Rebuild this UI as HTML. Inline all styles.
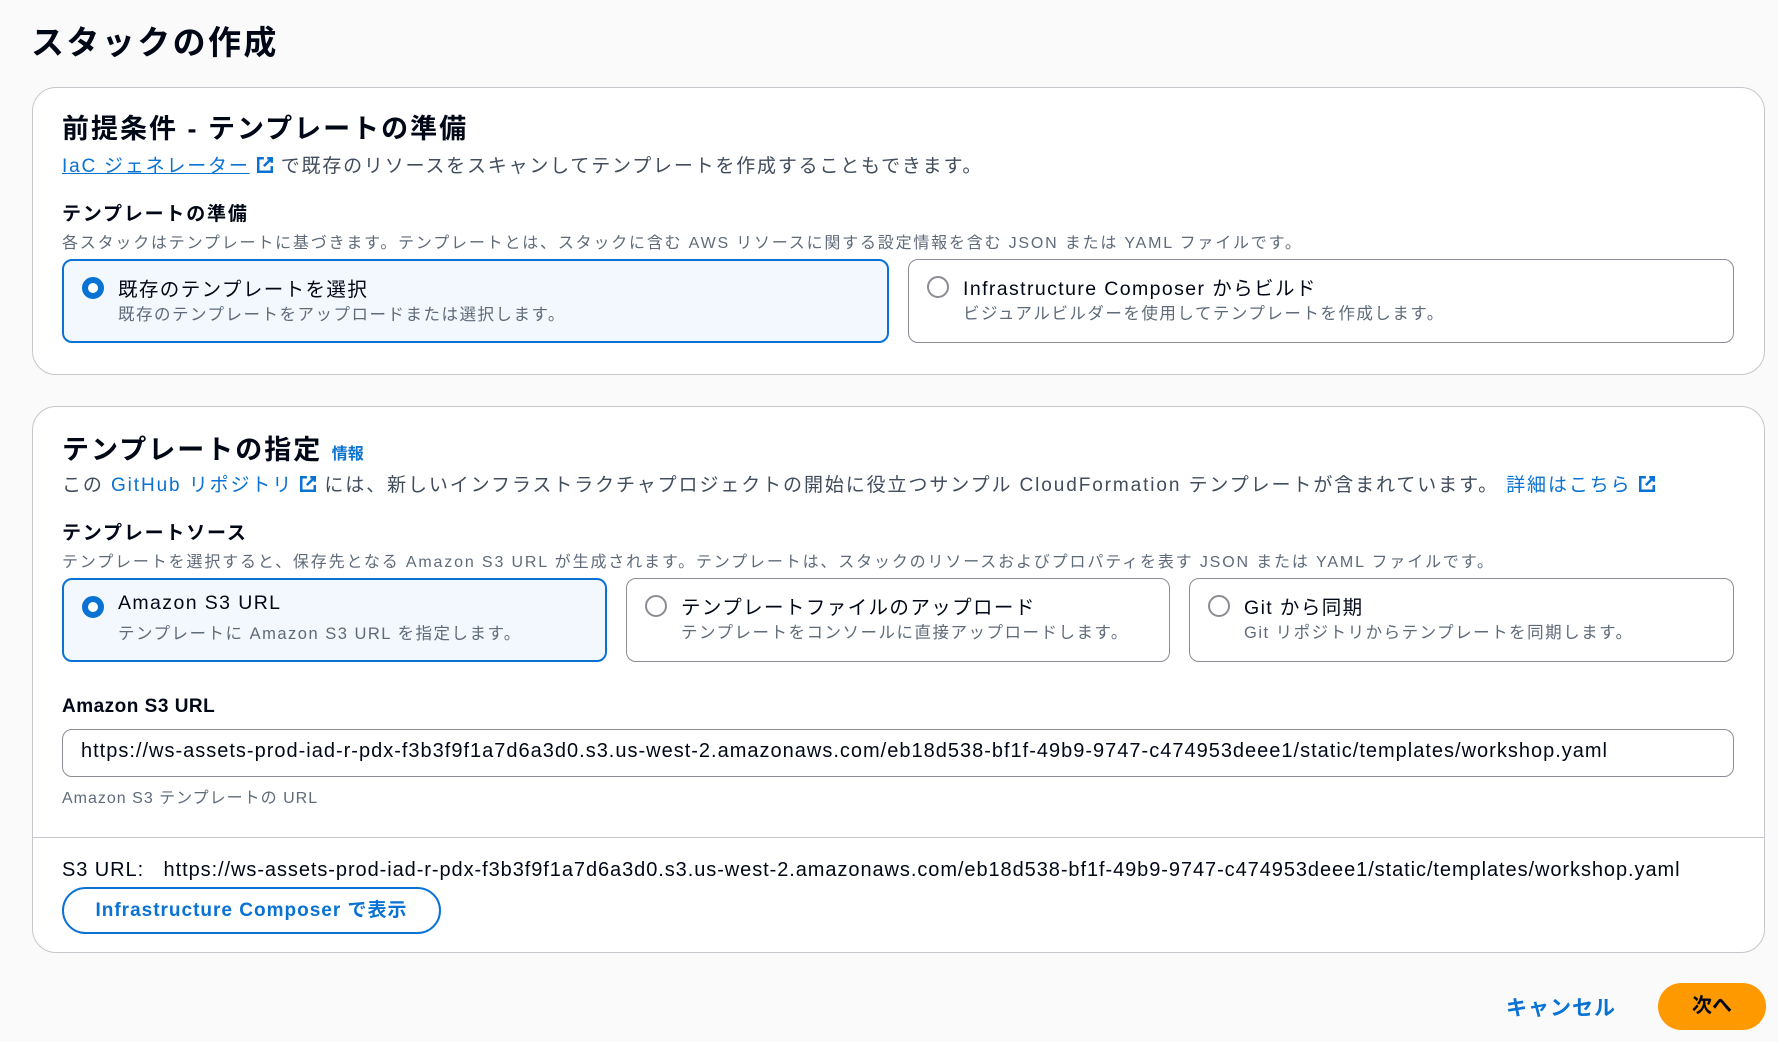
<!DOCTYPE html>
<html><head><meta charset="utf-8"><style>
*{box-sizing:border-box;margin:0;padding:0}
body{width:1778px;height:1042px;background:#fafafa;font-family:"Liberation Sans","Noto Sans CJK JP",sans-serif;color:#000716;position:relative;overflow:hidden}
.a{position:absolute;white-space:nowrap}
.card{position:absolute;left:32px;width:1733px;background:#fff;border:1px solid #c6c6cd;border-radius:24px}
h1{font-size:33px;font-weight:700;letter-spacing:2.4px}
.h2{font-size:27px;font-weight:700;letter-spacing:2px}
.t{font-size:19px;color:#414d5c;letter-spacing:1.8px}
.lbl{font-size:19px;font-weight:700;letter-spacing:1.8px}
.desc{font-size:16px;color:#5f6b7a;letter-spacing:1.8px}
.link{color:#0972d3}
.tile{position:absolute;border:1px solid #8c8c94;border-radius:10px;background:#fff}
.tile.sel{border:2px solid #0972d3;background:#f2f8fd}
.radio{position:absolute;left:18px;top:16px;width:22px;height:22px;border-radius:50%;border:2px solid #8c8c94;background:#fff}
.sel .radio{border:6px solid #0972d3}
.tt{position:absolute;left:54px;top:12px;font-size:19.5px;white-space:nowrap;letter-spacing:1.4px}
.ts{position:absolute;left:54px;top:40px;font-size:16.5px;color:#5f6b7a;white-space:nowrap;letter-spacing:1.5px}
.ext{display:inline-block;vertical-align:-2px;margin-left:6px}
.url{font-size:20px;letter-spacing:1.0px}
</style></head><body>
<h1 class="a" style="left:31px;top:16px">スタックの作成</h1>

<div class="card" style="top:87px;height:288px"></div>
<div class="a h2" style="left:62px;top:107px">前提条件 - テンプレートの準備</div>
<div class="a t" style="left:62px;top:151px"><span class="link" style="text-decoration:underline">IaC ジェネレーター</span><svg class="ext" width="18" height="18" viewBox="0 0 16 16"><path d="M7 2H2v12h12V9M10 2h4v4M14 2 7 9" fill="none" stroke="#0972d3" stroke-width="2.2"/></svg> で既存のリソースをスキャンしてテンプレートを作成することもできます。</div>
<div class="a lbl" style="left:62px;top:199px">テンプレートの準備</div>
<div class="a desc" style="left:62px;top:229px">各スタックはテンプレートに基づきます。テンプレートとは、スタックに含む AWS リソースに関する設定情報を含む JSON または YAML ファイルです。</div>
<div class="tile sel" style="left:62px;top:259px;width:827px;height:84px"><div class="radio"></div><div class="tt">既存のテンプレートを選択</div><div class="ts">既存のテンプレートをアップロードまたは選択します。</div></div>
<div class="tile" style="left:908px;top:259px;width:826px;height:84px"><div class="radio"></div><div class="tt">Infrastructure Composer からビルド</div><div class="ts">ビジュアルビルダーを使用してテンプレートを作成します。</div></div>

<div class="card" style="top:406px;height:547px"></div>
<div class="a h2" style="left:62px;top:428px">テンプレートの指定 <span style="font-size:16px;color:#0972d3;letter-spacing:0">情報</span></div>
<div class="a t" style="left:62px;top:470px;letter-spacing:1.9px">この <span class="link">GitHub リポジトリ</span><svg class="ext" width="18" height="18" viewBox="0 0 16 16"><path d="M7 2H2v12h12V9M10 2h4v4M14 2 7 9" fill="none" stroke="#0972d3" stroke-width="2.2"/></svg> には、新しいインフラストラクチャプロジェクトの開始に役立つサンプル CloudFormation テンプレートが含まれています。 <span class="link">詳細はこちら</span><svg class="ext" width="18" height="18" viewBox="0 0 16 16"><path d="M7 2H2v12h12V9M10 2h4v4M14 2 7 9" fill="none" stroke="#0972d3" stroke-width="2.2"/></svg></div>
<div class="a lbl" style="left:62px;top:518px">テンプレートソース</div>
<div class="a desc" style="left:62px;top:548px;letter-spacing:1.85px">テンプレートを選択すると、保存先となる Amazon S3 URL が生成されます。テンプレートは、スタックのリソースおよびプロパティを表す JSON または YAML ファイルです。</div>
<div class="tile sel" style="left:62px;top:578px;width:545px;height:84px"><div class="radio"></div><div class="tt">Amazon S3 URL</div><div class="ts">テンプレートに Amazon S3 URL を指定します。</div></div>
<div class="tile" style="left:626px;top:578px;width:544px;height:84px"><div class="radio"></div><div class="tt">テンプレートファイルのアップロード</div><div class="ts">テンプレートをコンソールに直接アップロードします。</div></div>
<div class="tile" style="left:1189px;top:578px;width:545px;height:84px"><div class="radio"></div><div class="tt">Git から同期</div><div class="ts">Git リポジトリからテンプレートを同期します。</div></div>
<div class="a lbl" style="left:62px;top:696px;letter-spacing:0.5px">Amazon S3 URL</div>
<div class="a" style="left:62px;top:729px;width:1672px;height:48px;border:1px solid #8c8c94;border-radius:10px;background:#fff"></div>
<div class="a url" style="left:81px;top:740px">https://ws-assets-prod-iad-r-pdx-f3b3f9f1a7d6a3d0.s3.us-west-2.amazonaws.com/eb18d538-bf1f-49b9-9747-c474953deee1/static/templates/workshop.yaml</div>
<div class="a desc" style="left:62px;top:784px;letter-spacing:1px">Amazon S3 テンプレートの URL</div>
<div class="a" style="left:33px;top:837px;width:1731px;height:1px;background:#c6c6cd"></div>
<div class="a url" style="left:62px;top:859px;letter-spacing:0.93px">S3 URL:&nbsp;&nbsp; https://ws-assets-prod-iad-r-pdx-f3b3f9f1a7d6a3d0.s3.us-west-2.amazonaws.com/eb18d538-bf1f-49b9-9747-c474953deee1/static/templates/workshop.yaml</div>
<div class="a" style="left:62px;top:887px;width:379px;height:47px;border:2px solid #0972d3;border-radius:24px;color:#0972d3;font-weight:700;font-size:19px;text-align:center;line-height:43px;letter-spacing:1px">Infrastructure Composer で表示</div>

<div class="a" style="left:1506px;top:992px;font-size:21px;font-weight:700;color:#0972d3;letter-spacing:1px">キャンセル</div>
<div class="a" style="left:1658px;top:983px;width:108px;height:47px;border-radius:24px;background:#ff9900;font-size:20px;font-weight:700;text-align:center;line-height:47px">次へ</div>
</body></html>
